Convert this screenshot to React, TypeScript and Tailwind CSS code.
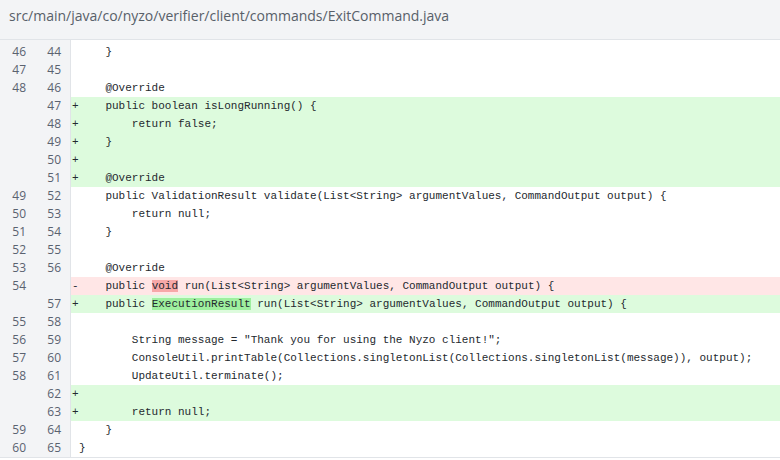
import React from 'react';

type Line = {
  old?: number;
  neu?: number;
  kind: 'ctx' | 'add' | 'del';
  code: React.ReactNode;
};

const lines: Line[] = [
  { old: 46, neu: 44, kind: 'ctx', code: '    }' },
  { old: 47, neu: 45, kind: 'ctx', code: '' },
  { old: 48, neu: 46, kind: 'ctx', code: '    @Override' },
  { neu: 47, kind: 'add', code: '    public boolean isLongRunning() {' },
  { neu: 48, kind: 'add', code: '        return false;' },
  { neu: 49, kind: 'add', code: '    }' },
  { neu: 50, kind: 'add', code: '' },
  { neu: 51, kind: 'add', code: '    @Override' },
  { old: 49, neu: 52, kind: 'ctx', code: '    public ValidationResult validate(List<String> argumentValues, CommandOutput output) {' },
  { old: 50, neu: 53, kind: 'ctx', code: '        return null;' },
  { old: 51, neu: 54, kind: 'ctx', code: '    }' },
  { old: 52, neu: 55, kind: 'ctx', code: '' },
  { old: 53, neu: 56, kind: 'ctx', code: '    @Override' },
  {
    old: 54,
    kind: 'del',
    code: (
      <>
        {'    public '}
        <span className="bg-[#f7a8a8]">void</span>
        {' run(List<String> argumentValues, CommandOutput output) {'}
      </>
    ),
  },
  {
    neu: 57,
    kind: 'add',
    code: (
      <>
        {'    public '}
        <span className="bg-[#9eef9e]">ExecutionResult</span>
        {' run(List<String> argumentValues, CommandOutput output) {'}
      </>
    ),
  },
  { old: 55, neu: 58, kind: 'ctx', code: '' },
  { old: 56, neu: 59, kind: 'ctx', code: '        String message = "Thank you for using the Nyzo client!";' },
  { old: 57, neu: 60, kind: 'ctx', code: '        ConsoleUtil.printTable(Collections.singletonList(Collections.singletonList(message)), output);' },
  { old: 58, neu: 61, kind: 'ctx', code: '        UpdateUtil.terminate();' },
  { neu: 62, kind: 'add', code: '' },
  { neu: 63, kind: 'add', code: '        return null;' },
  { old: 59, neu: 64, kind: 'ctx', code: '    }' },
  { old: 60, neu: 65, kind: 'ctx', code: '}' },
];

export default function App() {
  return (
    <div className="w-[780px] h-[460px] bg-white overflow-hidden">
      {/* File header */}
      <div className="h-[40px] bg-[#f3f4f6] border-b border-[#e1e4e8] flex items-center pl-[9px] pb-[8px]">
        <span className="text-[14px] text-[#586069] font-['Open_Sans',sans-serif]">
          src/main/java/co/nyzo/verifier/client/commands/ExitCommand.java
        </span>
      </div>

      {/* Diff body */}
      <div className="flex border-b border-[#e1e4e8]">
        <div className="w-[71px] shrink-0 bg-[#f3f4f6] border-r border-[#e1e4e8] pt-[3px]">
          {lines.map((l, i) => (
            <div
              key={i}
              className="h-[18px] flex items-center text-[12px] text-[#5a6270] font-['Open_Sans',sans-serif]"
            >
              <span className="w-[26px] text-right">{l.old ?? ''}</span>
              <span className="w-[35px] text-right">{l.neu ?? ''}</span>
            </div>
          ))}
        </div>
        <div className="flex-1 pt-[3px]">
          {lines.map((l, i) => (
            <div
              key={i}
              className={`h-[18px] flex items-center whitespace-pre text-[11px] text-[#24292e] font-['Liberation_Mono',monospace] ${
                l.kind === 'add' ? 'bg-[#ddfbdd]' : l.kind === 'del' ? 'bg-[#ffe6e6]' : ''
              }`}
            >
              <span className="w-[8px] shrink-0 pl-[1px]">
                {l.kind === 'add' ? '+' : l.kind === 'del' ? '-' : ''}
              </span>
              <span>{l.code}</span>
            </div>
          ))}
        </div>
      </div>
    </div>
  );
}
